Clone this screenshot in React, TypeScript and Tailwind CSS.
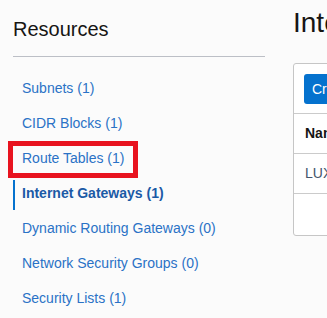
export default function App() {
  const items = [
    { label: "Subnets (1)" },
    { label: "CIDR Blocks (1)" },
    { label: "Route Tables (1)", marked: true },
    { label: "Internet Gateways (1)", active: true },
    { label: "Dynamic Routing Gateways (0)" },
    { label: "Network Security Groups (0)" },
    { label: "Security Lists (1)" },
  ];

  return (
    <div className="w-[327px] h-[318px] overflow-hidden bg-[#fbfbfb] flex font-['Liberation_Sans',Arial,sans-serif] text-[#161513]">
      {/* side nav */}
      <div className="w-[252px] shrink-0 ml-[13px] pt-[17px]">
        <h2 className="text-[20px] leading-[24px] font-normal">Resources</h2>
        <div className="mt-[15px] h-px bg-[#bcbfc6]" />
        <ul className="mt-[14px]">
          {items.map((it) => (
            <li key={it.label} className="relative h-[35px] leading-[35px] text-[14px] pl-[9px] whitespace-nowrap">
              {it.active && <span className="absolute left-0 top-[4px] w-[2px] h-[30px] bg-[#0572ce]" />}
              {it.marked && <span className="absolute left-[-5px] top-0 w-[130px] h-[37px] border-[5px] border-[#e8131f]" />}
              <a className={it.active ? "font-bold text-[#1b5aa6]" : "text-[#2a72c6]"}>{it.label}</a>
            </li>
          ))}
        </ul>
      </div>

      {/* main content */}
      <div className="ml-[28px] shrink-0 w-[500px] pt-[3px]">
        <h1 className="text-[28px] leading-[40px] font-normal whitespace-nowrap">Internet Gateways</h1>
        <div className="mt-[20px] h-[173px] border border-[#c6c6c6] rounded-[3px] bg-white">
          <div className="p-[10px] h-[50px] border-b border-[#cbcbcb]">
            <button className="h-[30px] px-[8px] rounded-[3px] bg-[#0572ce] text-white text-[14px] whitespace-nowrap">
              Create Internet Gateway
            </button>
          </div>
          <div className="h-[40px] leading-[39px] pl-[11px] border-b border-[#cbcbcb] text-[14px] font-bold whitespace-nowrap">
            Name
          </div>
          <div className="h-[40px] leading-[39px] pl-[11px] border-b border-[#cbcbcb] text-[14px] text-[#44546a] whitespace-nowrap">
            LUX-IGW
          </div>
        </div>
      </div>
    </div>
  );
}
